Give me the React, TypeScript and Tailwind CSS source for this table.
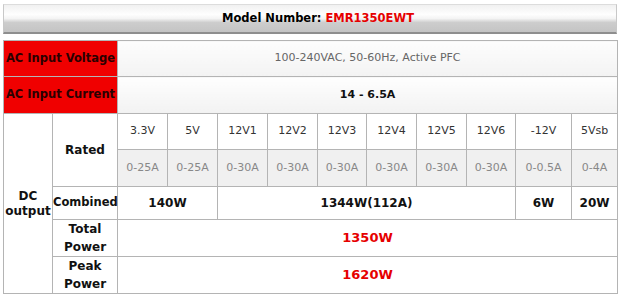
import React from "react";

const rails = ["3.3V", "5V", "12V1", "12V2", "12V3", "12V4", "12V5", "12V6", "-12V", "5Vsb"];
const amps = ["0-25A", "0-25A", "0-30A", "0-30A", "0-30A", "0-30A", "0-30A", "0-30A", "0-0.5A", "0-4A"];
const widths = [49, 65, 50, 50, 50, 50, 49, 50, 50, 49, 56, 46];

export default function App() {
  const cell = "border border-[#b4b4b4] text-center align-middle p-0";
  return (
    <div className="w-[620px] h-[295px] bg-white pl-[3px] pt-[4px]" style={{ fontFamily: '"DejaVu Sans", Verdana, sans-serif' }}>
      <div className="w-[614px] h-[30px] pl-[16px] pt-[1px] border-t border-t-[#dcdcdc] border-b-2 border-b-[#8e8e8e] border-x border-x-[#c8c8c8] bg-[linear-gradient(to_bottom,#f0f0f0_0%,#fefefe_35%,#f4f4f4_50%,#cdcdcd_65%,#c4c4c4_100%)] flex items-center justify-center text-[11.5px] font-bold text-black">
        <span>Model Number: <span className="text-[#e60000]">EMR1350EWT</span></span>
      </div>
      <table className="mt-[6px] w-[614px] table-fixed border-collapse border border-[#a8a8a8]">
        <colgroup>
          {widths.map((w, i) => (
            <col key={i} style={{ width: w }} />
          ))}
        </colgroup>
        <tbody>
          <tr className="h-[36px]">
            <td colSpan={2} className={`${cell} bg-[#f00000] text-[#2a0000] font-bold text-[11.5px] whitespace-nowrap`}>AC Input Voltage</td>
            <td colSpan={10} className={`${cell} bg-[linear-gradient(to_bottom,#fdfdfd,#f3f3f3)] text-[#666] text-[11px]`}>100-240VAC, 50-60Hz, Active PFC</td>
          </tr>
          <tr className="h-[37px]">
            <td colSpan={2} className={`${cell} bg-[#f00000] text-[#2a0000] font-bold text-[11.5px] whitespace-nowrap`}>AC Input Current</td>
            <td colSpan={10} className={`${cell} bg-[linear-gradient(to_bottom,#fefefe,#f2f2f2)] text-[#111] font-bold text-[11px]`}>14 - 6.5A</td>
          </tr>
          <tr className="h-[36px]">
            <td rowSpan={5} className={`${cell} font-bold text-[12px] text-[#111] leading-[15px]`}>DC<br />output</td>
            <td rowSpan={2} className={`${cell} font-bold text-[12px] text-[#111]`}>Rated</td>
            {rails.map((r, i) => (
              <td key={i} className={`${cell} text-[11px] text-[#333]`}>{r}</td>
            ))}
          </tr>
          <tr className="h-[37px]">
            {amps.map((a, i) => (
              <td key={i} className={`${cell} bg-[#f0f0f0] text-[11px] text-[#888]`}>{a}</td>
            ))}
          </tr>
          <tr className="h-[33px]">
            <td className={`${cell} font-bold text-[11.5px] text-[#111]`}>Combined</td>
            <td colSpan={2} className={`${cell} font-bold text-[12px] text-[#111]`}>140W</td>
            <td colSpan={6} className={`${cell} font-bold text-[12px] text-[#111]`}>1344W(112A)</td>
            <td className={`${cell} font-bold text-[12px] text-[#111]`}>6W</td>
            <td className={`${cell} font-bold text-[12px] text-[#111]`}>20W</td>
          </tr>
          <tr className="h-[37px]">
            <td className={`${cell} font-bold text-[12px] text-[#111] leading-[18px]`}>Total<br />Power</td>
            <td colSpan={10} className={`${cell} font-bold text-[13px] text-[#e60000]`}>1350W</td>
          </tr>
          <tr className="h-[36px]">
            <td className={`${cell} font-bold text-[12px] text-[#111] leading-[18px]`}>Peak<br />Power</td>
            <td colSpan={10} className={`${cell} font-bold text-[13px] text-[#e60000]`}>1620W</td>
          </tr>
        </tbody>
      </table>
    </div>
  );
}
